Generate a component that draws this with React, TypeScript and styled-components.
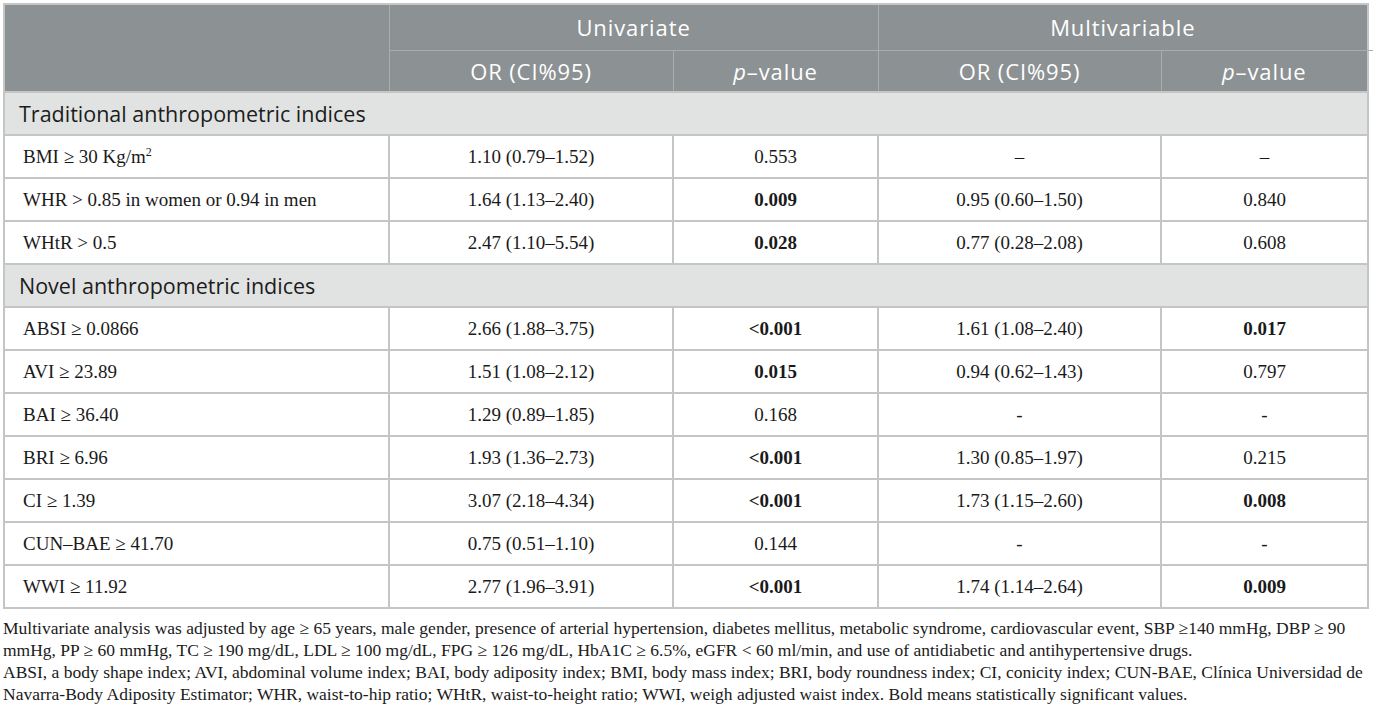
import React from 'react';
import styled, { createGlobalStyle } from 'styled-components';

const GlobalStyle = createGlobalStyle`
  html, body {
    margin: 0;
    padding: 0;
    background: #ffffff;
  }
`;

type Row = {
  label: React.ReactNode;
  uniOr: string;
  uniP: string;
  uniBold?: boolean;
  multiOr: string;
  multiP: string;
  multiBold?: boolean;
};

const traditional: Row[] = [
  {
    label: (
      <>
        BMI ≥ 30 Kg/m<sup>2</sup>
      </>
    ),
    uniOr: '1.10 (0.79–1.52)',
    uniP: '0.553',
    multiOr: '–',
    multiP: '–',
  },
  {
    label: 'WHR > 0.85 in women or 0.94 in men',
    uniOr: '1.64 (1.13–2.40)',
    uniP: '0.009',
    uniBold: true,
    multiOr: '0.95 (0.60–1.50)',
    multiP: '0.840',
  },
  {
    label: 'WHtR > 0.5',
    uniOr: '2.47 (1.10–5.54)',
    uniP: '0.028',
    uniBold: true,
    multiOr: '0.77 (0.28–2.08)',
    multiP: '0.608',
  },
];

const novel: Row[] = [
  { label: 'ABSI ≥ 0.0866', uniOr: '2.66 (1.88–3.75)', uniP: '<0.001', uniBold: true, multiOr: '1.61 (1.08–2.40)', multiP: '0.017', multiBold: true },
  { label: 'AVI ≥ 23.89', uniOr: '1.51 (1.08–2.12)', uniP: '0.015', uniBold: true, multiOr: '0.94 (0.62–1.43)', multiP: '0.797' },
  { label: 'BAI ≥ 36.40', uniOr: '1.29 (0.89–1.85)', uniP: '0.168', multiOr: '-', multiP: '-' },
  { label: 'BRI ≥ 6.96', uniOr: '1.93 (1.36–2.73)', uniP: '<0.001', uniBold: true, multiOr: '1.30 (0.85–1.97)', multiP: '0.215' },
  { label: 'CI ≥ 1.39', uniOr: '3.07 (2.18–4.34)', uniP: '<0.001', uniBold: true, multiOr: '1.73 (1.15–2.60)', multiP: '0.008', multiBold: true },
  { label: 'CUN–BAE ≥ 41.70', uniOr: '0.75 (0.51–1.10)', uniP: '0.144', multiOr: '-', multiP: '-' },
  { label: 'WWI ≥ 11.92', uniOr: '2.77 (1.96–3.91)', uniP: '<0.001', uniBold: true, multiOr: '1.74 (1.14–2.64)', multiP: '0.009', multiBold: true },
];

const DataRows = ({ rows }: { rows: Row[] }) => (
  <>
    {rows.map((r, i) => (
      <tr key={i}>
        <LabelCell>{r.label}</LabelCell>
        <ValueCell>{r.uniOr}</ValueCell>
        <ValueCell $bold={r.uniBold}>{r.uniP}</ValueCell>
        <ValueCell>{r.multiOr}</ValueCell>
        <ValueCell $bold={r.multiBold}>{r.multiP}</ValueCell>
      </tr>
    ))}
  </>
);

const App = () => {
  return (
    <Page>
      <GlobalStyle />
      <Table>
        <colgroup>
          <col style={{ width: 385 }} />
          <col style={{ width: 284 }} />
          <col style={{ width: 205 }} />
          <col style={{ width: 283 }} />
          <col style={{ width: 207 }} />
        </colgroup>
        <thead>
          <HeadRow $height={46}>
            <HeadCell rowSpan={2} />
            <HeadCell colSpan={2}>Univariate</HeadCell>
            <HeadCell colSpan={2} $stub>
              Multivariable
            </HeadCell>
          </HeadRow>
          <HeadRow $height={42}>
            <HeadCell>OR (CI%95)</HeadCell>
            <HeadCell>
              <em>p</em>–value
            </HeadCell>
            <HeadCell>OR (CI%95)</HeadCell>
            <HeadCell>
              <em>p</em>–value
            </HeadCell>
          </HeadRow>
        </thead>
        <tbody>
          <tr>
            <SectionCell colSpan={5}>Traditional anthropometric indices</SectionCell>
          </tr>
          <DataRows rows={traditional} />
          <tr>
            <SectionCell colSpan={5}>Novel anthropometric indices</SectionCell>
          </tr>
          <DataRows rows={novel} />
        </tbody>
      </Table>
      <Notes>
        <p>
          Multivariate analysis was adjusted by age ≥ 65 years, male gender, presence of arterial
          hypertension, diabetes mellitus, metabolic syndrome, cardiovascular event, SBP ≥140 mmHg,
          DBP ≥ 90 mmHg, PP ≥ 60 mmHg, TC ≥ 190 mg/dL, LDL ≥ 100 mg/dL, FPG ≥ 126 mg/dL, HbA1C ≥
          6.5%, eGFR &lt; 60 ml/min, and use of antidiabetic and antihypertensive drugs.
        </p>
        <p>
          ABSI, a body shape index; AVI, abdominal volume index; BAI, body adiposity index; BMI, body
          mass index; BRI, body roundness index; CI, conicity index; CUN-BAE, Clínica Universidad de
          Navarra-Body Adiposity Estimator; WHR, waist-to-hip ratio; WHtR, waist-to-height ratio; WWI,
          weigh adjusted waist index. Bold means statistically significant values.
        </p>
      </Notes>
    </Page>
  );
};

export default App;

const Page = styled.div`
  padding: 3px 0 0 3px;
  width: 1366px;
`;

const Table = styled.table`
  width: 1364px;
  border-collapse: collapse;
  table-layout: fixed;
  border: 2px solid #c3c8c6;
`;

const HeadRow = styled.tr<{ $height: number }>`
  height: ${(p) => p.$height}px;
`;

const HeadCell = styled.th<{ $stub?: boolean }>`
  position: relative;
  background: #8c9193;
  color: #ffffff;
  font-family: 'Open Sans', 'Liberation Sans', sans-serif;
  font-weight: 400;
  font-size: 22px;
  letter-spacing: 0.9px;
  text-align: center;
  padding: 0 8px;
  border: 1px solid #a8adae;

  em {
    font-style: italic;
  }

  ${(p) =>
    p.$stub &&
    `
    &::after {
      content: '';
      position: absolute;
      right: -6px;
      bottom: -1px;
      width: 6px;
      height: 1px;
      background: #a8adae;
    }
  `}
`;

const SectionCell = styled.td`
  height: 41px;
  background: #e1e3e2;
  color: #1c1c1c;
  font-family: 'Open Sans', 'Liberation Sans', sans-serif;
  font-size: 21.5px;
  padding: 0 14px;
  border: 2px solid #c4c6c6;
`;

const LabelCell = styled.td`
  height: 41px;
  padding: 0 18px;
  font-family: 'Liberation Serif', 'Times New Roman', serif;
  font-size: 19px;
  color: #1a1a1a;
  border: 2px solid #c4c6c6;

  sup {
    font-size: 12px;
    line-height: 0;
  }
`;

const ValueCell = styled.td<{ $bold?: boolean }>`
  height: 41px;
  padding: 0 8px;
  text-align: center;
  font-family: 'Liberation Serif', 'Times New Roman', serif;
  font-size: 19px;
  font-weight: ${(p) => (p.$bold ? 700 : 400)};
  color: #1a1a1a;
  border: 2px solid #c4c6c6;
`;

const Notes = styled.div`
  margin-top: 8px;
  font-family: 'Liberation Serif', 'Times New Roman', serif;
  font-size: 17.5px;
  line-height: 22px;
  color: #1a1a1a;

  p {
    margin: 0;
  }
`;
